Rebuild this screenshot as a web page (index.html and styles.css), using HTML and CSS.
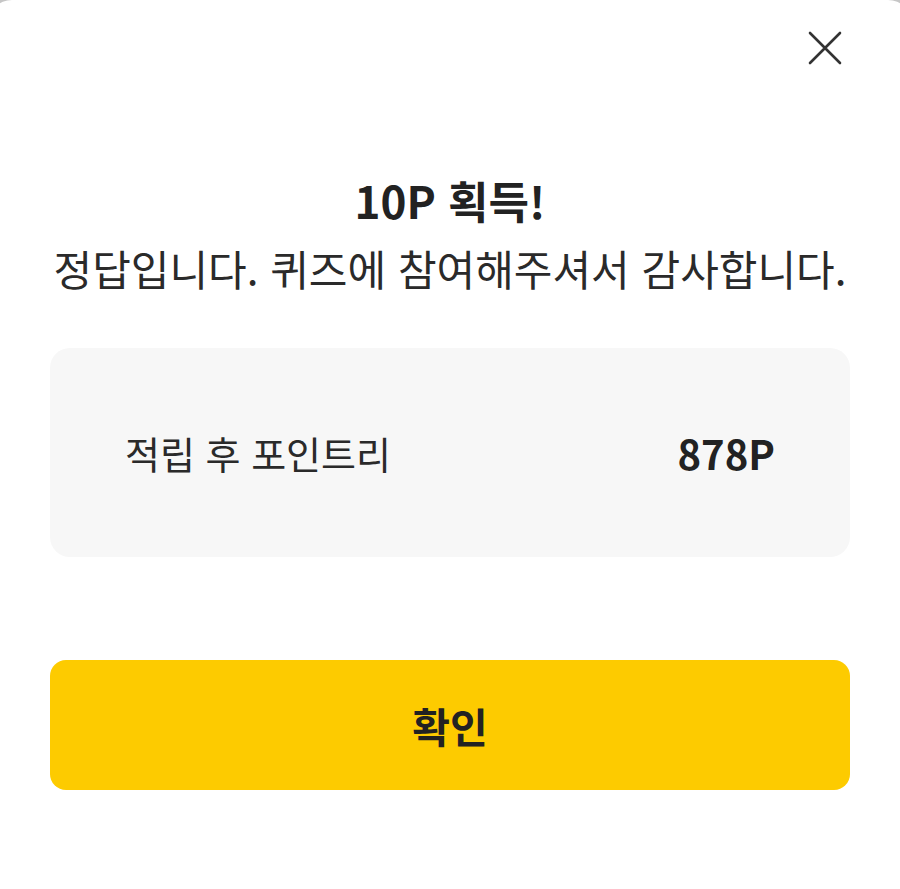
FILE: index.html
```html
<!DOCTYPE html>
<html lang="ko">
<head>
    <meta charset="UTF-8">
    <meta name="viewport" content="width=device-width, initial-scale=1.0">
    <title>포인트 획득</title>
    <link rel="stylesheet" href="styles.css">
</head>
<body>
    <div class="sheet">
        <div class="close-row">
            <button class="close" aria-label="닫기">
                <svg width="34" height="34" viewBox="0 0 34 34">
                    <path d="M2 2 L32 32 M32 2 L2 32" stroke="#333" stroke-width="2.6" stroke-linecap="round" fill="none"/>
                </svg>
            </button>
        </div>

        <h1 class="title">10P 획득!</h1>
        <p class="subtitle">정답입니다. 퀴즈에 참여해주셔서 감사합니다.</p>

        <div class="card">
            <span class="label">적립 후 포인트리</span>
            <span class="value">878P</span>
        </div>

        <button class="confirm">확인</button>
    </div>
</body>
</html>
```

FILE: styles.css
```css
/* page */
body {
    margin: 0;
    background-color: #c6c6c6;
    font-family: "Noto Sans CJK KR", "Noto Sans", sans-serif;
    color: #222;
    overflow: hidden;
}

/* bottom sheet */
.sheet {
    background-color: #fff;
    min-height: 889px;
    margin: 0 -12px;
    padding: 0 62px;
    border-radius: 24px 24px 0 0;
    box-sizing: border-box;
}

.close-row {
    display: flex;
    justify-content: flex-end;
    padding-top: 31px;
}

.close {
    background: none;
    border: 0;
    padding: 0;
    margin-right: 8px;
    width: 34px;
    height: 34px;
    cursor: pointer;
}

.close svg {
    display: block;
}

/* texts */
.title {
    margin: 107px 0 0;
    font-size: 44px;
    line-height: 56px;
    font-weight: 700;
    text-align: center;
}

.subtitle {
    margin: 12px 0 0;
    font-size: 42px;
    line-height: 56px;
    font-weight: 400;
    text-align: center;
    color: #2a2a2a;
    white-space: nowrap;
}

/* points box */
.card {
    margin-top: 52px;
    height: 209px;
    background-color: #f7f7f7;
    border-radius: 20px;
    padding: 0 75px;
    display: flex;
    justify-content: space-between;
    align-items: center;
}

.label {
    font-size: 38px;
    color: #2a2a2a;
}

.value {
    font-size: 40px;
    font-weight: 700;
}

/* main button */
.confirm {
    display: block;
    width: 100%;
    margin-top: 103px;
    height: 130px;
    border: 0;
    border-radius: 16px;
    background-color: #fdcb00;
    font-family: inherit;
    font-size: 41px;
    font-weight: 700;
    color: #222;
    cursor: pointer;
}
```
